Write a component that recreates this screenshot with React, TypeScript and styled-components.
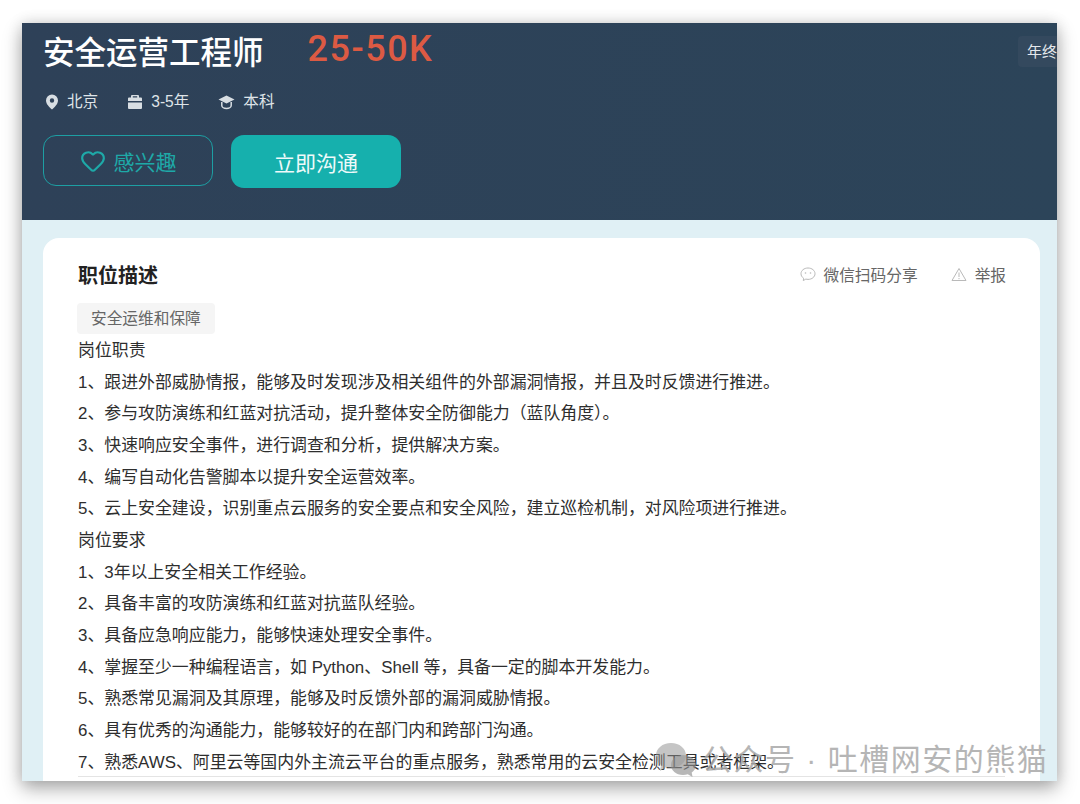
import { createGlobalStyle, styled } from 'styled-components'
import { Heart } from 'lucide-react'

const Global = createGlobalStyle`
  html, body {
    margin: 0;
    height: 804px;
    overflow: hidden;
    background: #fff;
    font-family: 'Liberation Sans', 'Noto Sans CJK SC', sans-serif;
  }
`

const duties = [
  '1、跟进外部威胁情报，能够及时发现涉及相关组件的外部漏洞情报，并且及时反馈进行推进。',
  '2、参与攻防演练和红蓝对抗活动，提升整体安全防御能力（蓝队角度）。',
  '3、快速响应安全事件，进行调查和分析，提供解决方案。',
  '4、编写自动化告警脚本以提升安全运营效率。',
  '5、云上安全建设，识别重点云服务的安全要点和安全风险，建立巡检机制，对风险项进行推进。',
]

const needs = [
  '1、3年以上安全相关工作经验。',
  '2、具备丰富的攻防演练和红蓝对抗蓝队经验。',
  '3、具备应急响应能力，能够快速处理安全事件。',
  '4、掌握至少一种编程语言，如 Python、Shell 等，具备一定的脚本开发能力。',
  '5、熟悉常见漏洞及其原理，能够及时反馈外部的漏洞威胁情报。',
  '6、具有优秀的沟通能力，能够较好的在部门内和跨部门沟通。',
  '7、熟悉AWS、阿里云等国内外主流云平台的重点服务，熟悉常用的云安全检测工具或者框架。',
]

const App = () => {
  return (
    <Page>
      <Global />
      <Window>
        <Header>
          <TitleRow>
            <Title>安全运营工程师</Title>
            <Salary>25-50K</Salary>
          </TitleRow>
          <MetaRow>
            <MetaItem>
              <svg width="14" height="16" viewBox="0 0 14 16">
                <path
                  fill="#d8dee3"
                  fillRule="evenodd"
                  d="M7 0.5a6 6 0 0 1 6 6c0 3.6-3.6 7-6 9-2.4-2-6-5.400-6-9a6 6 0 0 1 6-6zM7 4.300a2.200 2.200 0 1 0 0 4.400 2.200 2.200 0 0 0 0-4.400z"
                />
              </svg>
              北京
            </MetaItem>
            <MetaItem>
              <svg width="16" height="16" viewBox="0 0 16 16">
                <path
                  fill="#d8dee3"
                  d="M5 1h6a1 1 0 0 1 1 1v1.500h2a1 1 0 0 1 1 1V7H1V4.500a1 1 0 0 1 1-1h2V2a1 1 0 0 1 1-1zm.8 1.300v1.200h4.400V2.300H5.800zM1 8.500h14V14a1 1 0 0 1-1 1H2a1 1 0 0 1-1-1V8.500z"
                />
              </svg>
              3-5年
            </MetaItem>
            <MetaItem>
              <svg width="17" height="16" viewBox="0 0 17 16">
                <path fill="#d8dee3" d="M8.500 1.500L16.500 5.500 8.500 9.500 0.500 5.500z" />
                <path
                  fill="none"
                  stroke="#d8dee3"
                  strokeWidth="1.500"
                  d="M3.800 8v3.500c0 1.700 2.300 3 4.700 3s4.700-1.300 4.700-3V8"
                />
              </svg>
              本科
            </MetaItem>
          </MetaRow>
          <ButtonRow>
            <OutlineButton>
              <Heart size={26} strokeWidth={2} />
              感兴趣
            </OutlineButton>
            <SolidButton>立即沟通</SolidButton>
          </ButtonRow>
          <SideTag>年终</SideTag>
        </Header>
        <Body>
          <Card>
            <CardHead>
              <CardTitle>职位描述</CardTitle>
              <Actions>
                <Action>
                  <svg width="16" height="15" viewBox="0 0 16 15">
                    <path
                      fill="none"
                      stroke="#b9b9b9"
                      strokeWidth="1"
                      d="M8 1c3.900 0 7 2.500 7 5.700s-3.100 5.700-7 5.700c-.8 0-1.500-.1-2.200-.3L3.300 13.600l.3-2.400C2 10.200 1 8.600 1 6.700 1 3.500 4.100 1 8 1z"
                    />
                    <circle cx="5.500" cy="6" r="0.800" fill="#b9b9b9" />
                    <circle cx="10.500" cy="6" r="0.800" fill="#b9b9b9" />
                  </svg>
                  微信扫码分享
                </Action>
                <Action>
                  <svg width="16" height="15" viewBox="0 0 16 15">
                    <path
                      fill="none"
                      stroke="#b9b9b9"
                      strokeWidth="1"
                      d="M8 1.500L15 13.500H1z"
                    />
                    <path stroke="#b9b9b9" strokeWidth="1" d="M8 5.500v4.500M8 11v1.200" />
                  </svg>
                  举报
                </Action>
              </Actions>
            </CardHead>
            <Tag>安全运维和保障</Tag>
            <Line>岗位职责</Line>
            {duties.map((text) => (
              <Line key={text}>{text}</Line>
            ))}
            <Line>岗位要求</Line>
            {needs.map((text) => (
              <Line key={text}>{text}</Line>
            ))}
            <Divider />
          </Card>
        </Body>
        <Watermark>
          <svg width="42" height="36" viewBox="0 0 42 36">
            <path
              fill="#8f8f8f"
              fillOpacity="0.6"
              d="M16 1c8.500 0 15 5.500 15 12.500S24.500 26 16 26c-1.800 0-3.500-.2-5-.7L5 29l1-6C3 20.500 1 17.200 1 13.500 1 6.500 7.500 1 16 1z"
            />
            <path
              fill="#8f8f8f"
              fillOpacity="0.75"
              d="M28 13c7 0 13 4.500 13 10 0 3-1.700 5.700-4.300 7.500l.8 4.500-4.700-2.700c-1.500.4-3.100.7-4.800.7-7 0-12-4.500-12-10s5-10 12-10z"
            />
          </svg>
          <WatermarkText>公众号 · 吐槽网安的熊猫</WatermarkText>
        </Watermark>
      </Window>
    </Page>
  )
}

const Page = styled.div`
  padding: 23px 0 0 22px;
`
const Window = styled.div`
  position: relative;
  width: 1035px;
  height: 758px;
  overflow: hidden;
  display: flex;
  flex-direction: column;
  box-shadow: 0 8px 18px rgba(0, 0, 0, 0.3), 0 0 14px rgba(0, 0, 0, 0.14);
`
const Header = styled.div`
  position: relative;
  flex: none;
  box-sizing: border-box;
  height: 197px;
  padding: 8px 0 0 21px;
  background: linear-gradient(90deg, #2e4158, #2c4459);
`
const TitleRow = styled.div`
  display: flex;
  align-items: flex-start;
  gap: 44px;
  height: 45px;
`
const Title = styled.h1`
  margin: 0;
  font-size: 31.500px;
  line-height: 44px;
  font-weight: 500;
  color: #fff;
`
const Salary = styled.span`
  font-family: 'Roboto', sans-serif;
  font-size: 36px;
  line-height: 36px;
  font-weight: 500;
  letter-spacing: 1.500px;
  color: #dc5a43;
`
const MetaRow = styled.div`
  display: flex;
  gap: 29px;
  margin-top: 15px;
  padding-left: 2px;
`
const MetaItem = styled.span`
  display: flex;
  align-items: center;
  gap: 8px;
  font-size: 15.600px;
  line-height: 22px;
  color: #dfe4e8;
`
const ButtonRow = styled.div`
  display: flex;
  gap: 18px;
  margin-top: 22px;
`
const OutlineButton = styled.div`
  box-sizing: border-box;
  display: flex;
  align-items: center;
  justify-content: center;
  gap: 8px;
  width: 170px;
  height: 51px;
  border: 1px solid #1d9fa3;
  border-radius: 13px;
  font-size: 21px;
  color: #1ea9a8;
`
const SolidButton = styled.div`
  display: flex;
  align-items: center;
  justify-content: center;
  width: 170px;
  height: 53px;
  border-radius: 13px;
  background: #16b0ad;
  font-size: 21px;
  color: #eefafa;
`
const SideTag = styled.div`
  position: absolute;
  top: 13px;
  right: 0;
  width: 30px;
  height: 31px;
  padding-left: 9px;
  border-radius: 4px 0 0 4px;
  background: #34495e;
  font-size: 15px;
  line-height: 31px;
  white-space: nowrap;
  color: #e4e8ec;
`
const Body = styled.div`
  flex: 1;
  min-height: 0;
  padding: 18px 17px 0 21px;
  background: #e0f0f5;
`
const Card = styled.div`
  box-sizing: border-box;
  height: 100%;
  padding: 23px 34px 0 35px;
  background: #fff;
  border-radius: 16px 16px 0 0;
`
const CardHead = styled.div`
  display: flex;
  align-items: center;
  justify-content: space-between;
  height: 27px;
`
const CardTitle = styled.h2`
  margin: 0;
  font-size: 20px;
  font-weight: 600;
  color: #222;
`
const Actions = styled.div`
  display: flex;
  gap: 33px;
`
const Action = styled.span`
  display: flex;
  align-items: center;
  gap: 8px;
  font-size: 15.700px;
  color: #666;
`
const Tag = styled.div`
  box-sizing: border-box;
  width: 138px;
  height: 31px;
  margin: 15px 0 1px -1px;
  padding-left: 14px;
  border-radius: 4px;
  background: #f5f5f5;
  font-size: 15.700px;
  line-height: 31px;
  color: #666;
`
const Line = styled.div`
  font-size: 16.900px;
  line-height: 31.650px;
  white-space: nowrap;
  color: #2e2e2e;
`
const Divider = styled.div`
  margin: -2px 1px 0 0;
  border-top: 1px solid #e4e4e4;
`
const Watermark = styled.div`
  position: absolute;
  top: 719px;
  left: 633px;
  display: flex;
  align-items: center;
  opacity: 0.85;
`
const WatermarkText = styled.span`
  margin-left: 5px;
  font-size: 30px;
  line-height: 36px;
  letter-spacing: 1.500px;
  white-space: nowrap;
  color: #a9a9a9;
`

export default App
